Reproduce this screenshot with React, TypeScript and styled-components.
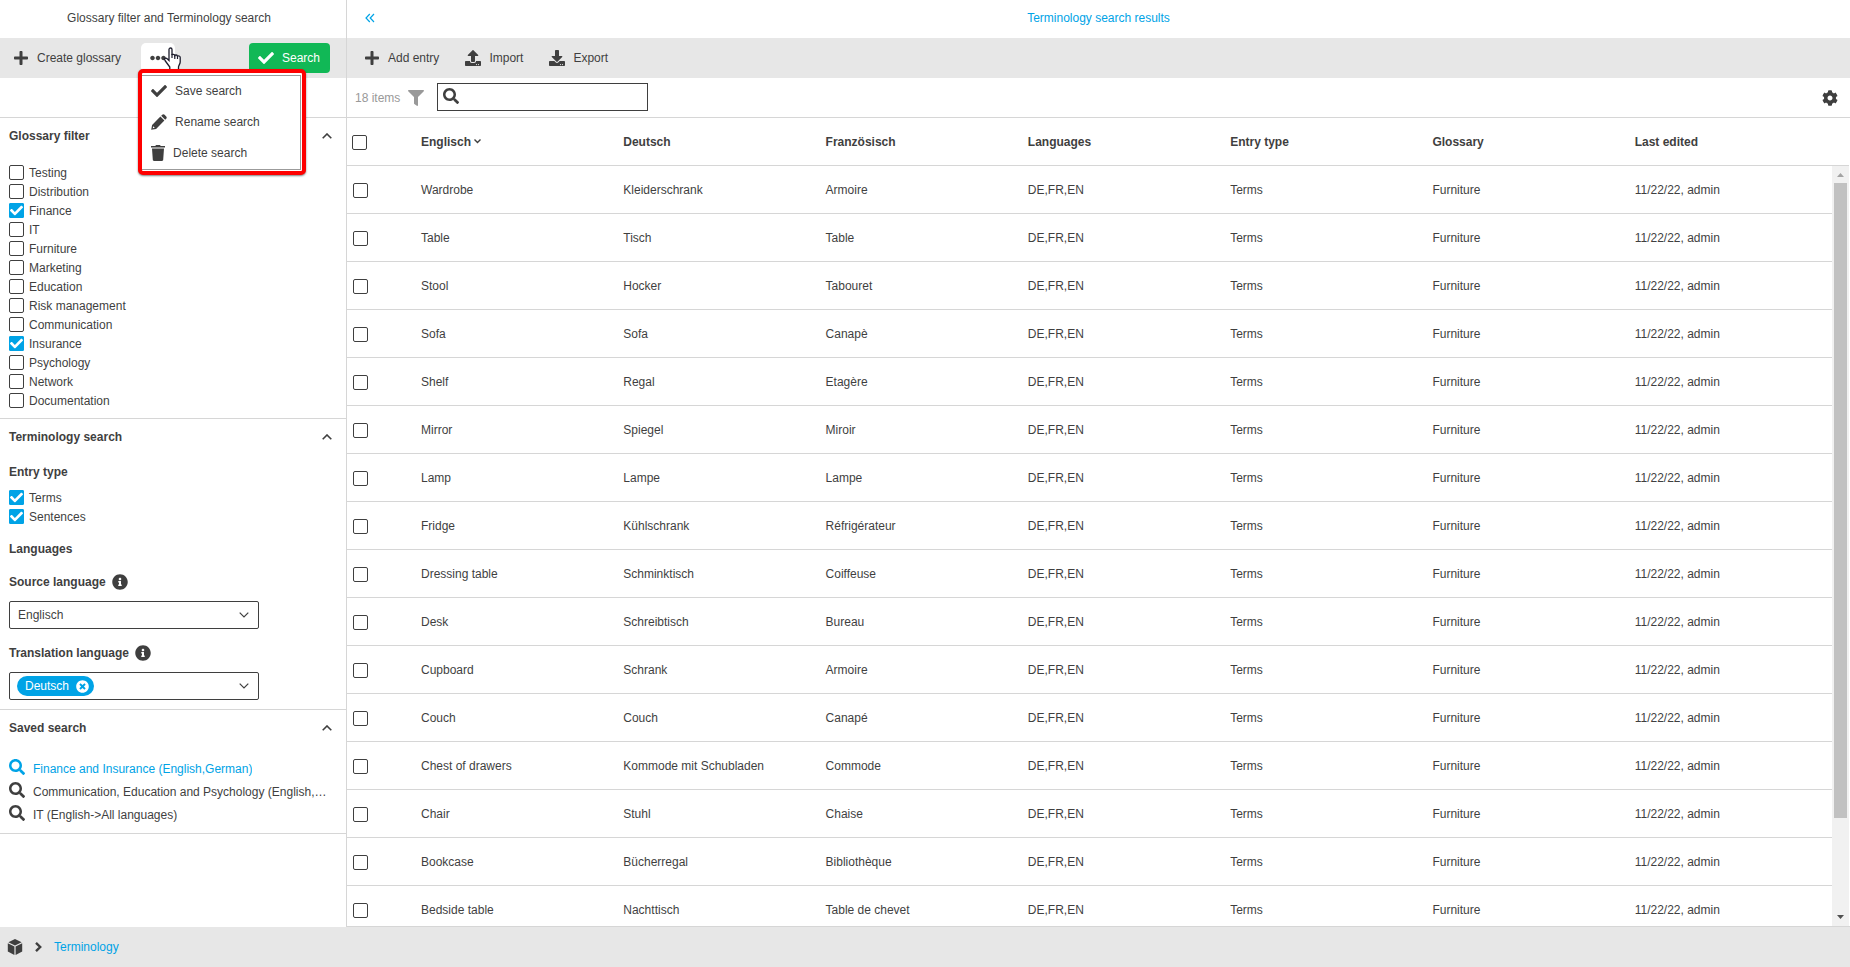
import React, { useState } from 'react';
import styled, { createGlobalStyle, css } from 'styled-components';
import {
  FaPlus, FaCheck, FaSearch, FaInfoCircle, FaFilter,
  FaUpload, FaDownload, FaCog, FaEllipsisH, FaTimesCircle,
} from 'react-icons/fa';

const ink = '#3f3f3f';
const blue = '#00a3e6';
const line = '#d6d6d6';
const bar = '#e7e7e7';

const GlobalStyle = createGlobalStyle`
  * { box-sizing: border-box; }
  body {
    margin: 0;
    background: #fff;
    color: ${ink};
    font: 12px/16px "Liberation Sans", Arial, sans-serif;
  }
  button, input, select { font: inherit; color: inherit; }
  button { background: none; border: 0; padding: 0; cursor: pointer; }
  svg { display: block; flex: none; }
`;

const Page = styled.div`
  display: grid;
  grid-template: minmax(0, 1fr) 40px / 347px minmax(0, 1fr);
  height: 100vh;
`;

const Sidebar = styled.aside`
  display: flex;
  flex-direction: column;
  border-right: 1px solid ${line};
  min-height: 0;
`;

const Main = styled.main`
  display: flex;
  flex-direction: column;
  min-height: 0;
  border-bottom: 1px solid ${line};
`;

const TitleBar = styled.header`
  display: grid;
  grid-template-columns: 40px 1fr 40px;
  align-items: center;
  height: 38px;
  flex: none;
  padding-bottom: 2px;
`;

const SideTitleBar = styled(TitleBar)`
  padding-right: 8px;
`;

const Title = styled.h1<{ $accent?: boolean }>`
  grid-column: 2;
  margin: 0;
  font-size: 12px;
  font-weight: 400;
  text-align: center;
  color: ${p => (p.$accent ? blue : ink)};
`;

const CollapseButton = styled.button`
  display: flex;
  justify-content: center;
  padding-left: 6px;
`;

const Toolbar = styled.div`
  display: flex;
  align-items: center;
  height: 40px;
  flex: none;
  padding: 0 16px 0 13px;
  background: ${bar};
`;

const MainToolbar = styled(Toolbar)`
  gap: 26px;
  padding-left: 17px;
`;

const ToolButton = styled.button`
  display: flex;
  align-items: center;
  gap: 8px;
`;

const MoreWrap = styled.div`
  position: relative;
  margin-left: 20px;
`;

const MoreButton = styled.button`
  display: flex;
  align-items: center;
  justify-content: center;
  width: 34px;
  height: 30px;
  border-radius: 5px;
  background: #fff;
`;

const SearchButton = styled.button`
  display: flex;
  align-items: center;
  gap: 8px;
  height: 30px;
  margin-left: auto;
  padding: 0 10px 0 9px;
  border-radius: 4px;
  background: #11b856;
  color: #fff;
`;

const Cursor = styled.svg`
  position: absolute;
  left: 22px;
  top: 4px;
  z-index: 1;
`;

const Highlight = styled.div`
  position: absolute;
  left: -3px;
  top: 26px;
  z-index: 2;
  width: 168px;
  border: 4px solid #fe0000;
  border-radius: 5px;
  background: #fff;
  box-shadow: 0 1px 2px rgba(0, 0, 0, 0.5);
`;

const Menu = styled.ul`
  margin: 2px 1px 1px 0;
  padding: 0;
  list-style: none;
  border: 1px solid #9b9b9b;
  border-left: 0;
`;

const MenuItem = styled.button`
  display: flex;
  align-items: center;
  gap: 8px;
  width: 100%;
  height: 31px;
  padding: 0 0 2px 9px;
`;

const Strip = styled.div`
  display: flex;
  align-items: center;
  height: 40px;
  flex: none;
  padding: 0 12px 0 8px;
  border-bottom: 1px solid ${line};
`;

const Count = styled.span`
  color: #999;
  margin-right: 8px;
`;

const FilterButton = styled.button`
  color: #999;
  margin-right: 13px;
`;

const SearchField = styled.label`
  display: flex;
  width: 211px;
  height: 28px;
  margin-bottom: 2px;
  padding: 4px 5px;
  gap: 6px;
  border: 1px solid ${ink};
`;

const SearchInput = styled.input`
  flex: 1;
  min-width: 0;
  padding: 0;
  border: 0;
  outline: 0;
  background: none;
`;

const SettingsButton = styled.button`
  margin-left: auto;
`;

const Section = styled.section<{ $bottom: number }>`
  padding: 0 9px ${p => p.$bottom}px;
  border-bottom: 1px solid ${line};
`;

const SectionHeader = styled.button`
  display: flex;
  align-items: center;
  justify-content: space-between;
  width: 100%;
  height: 36px;
  padding-right: 5px;
  font-weight: 700;
`;

const fieldTitle = css`
  display: flex;
  align-items: center;
  height: 33px;
  margin: 0;
  gap: 6px;
  font-size: 12px;
  font-weight: 700;
`;

const SubHeading = styled.h3`${fieldTitle}`;
const FieldLabel = styled.label`${fieldTitle}`;

const Group = styled.div`
  padding-top: 6px;
`;

const CheckList = styled.div<{ $top?: number }>`
  padding-top: ${p => p.$top ?? 0}px;
`;

const CheckLabel = styled.label`
  display: flex;
  align-items: center;
  gap: 5px;
  height: 19px;
`;

const CheckBox = styled.span`
  display: grid;
  flex: none;
  width: 15px;
  height: 15px;
  color: #fff;
  > * { grid-area: 1 / 1; place-self: center; }
`;

const CheckInput = styled.input`
  appearance: none;
  width: 15px;
  height: 15px;
  margin: 0;
  border: 1px solid ${ink};
  border-radius: 2px;
  background: #fff;
  &:checked { background: ${blue}; border-color: ${blue}; border-radius: 1px; }
  & + svg { visibility: hidden; pointer-events: none; }
  &:checked + svg { visibility: visible; }
`;

const SelectBox = styled.div`
  display: grid;
  align-items: center;
  width: 250px;
  height: 28px;
  margin: 3px 0 1px;
  border: 1px solid ${ink};
  border-radius: 2px;
  > * { grid-area: 1 / 1; }
  > svg { justify-self: end; margin-right: 9px; pointer-events: none; }
`;

const Select = styled.select`
  appearance: none;
  width: 100%;
  height: 26px;
  padding: 0 8px;
  border: 0;
  outline: 0;
  background: transparent;
`;

const Chip = styled.span`
  display: flex;
  align-items: center;
  justify-self: start;
  gap: 7px;
  height: 20px;
  margin-left: 7px;
  padding: 0 5px 0 8px;
  border-radius: 10px;
  background: ${blue};
  color: #fff;
`;

const SavedList = styled.ul`
  margin: 0;
  padding: 11px 0 0;
  list-style: none;
`;

const SavedLink = styled.a<{ $active?: boolean }>`
  display: flex;
  gap: 8px;
  height: 23px;
  padding: 2px 9px 0 0;
  color: ${p => (p.$active ? blue : ink)};
  text-decoration: none;
`;

const SavedText = styled.span`
  overflow: hidden;
  padding-top: 2px;
  white-space: nowrap;
  text-overflow: ellipsis;
`;

const Results = styled.div`
  display: grid;
  grid-template-columns: minmax(0, 1fr) 17px;
  flex: 1;
  min-height: 0;
  padding-right: 1px;
`;

const TableView = styled.div`
  overflow: hidden;
  min-height: 0;
`;

const Table = styled.table`
  width: 100%;
  table-layout: fixed;
  border-collapse: separate;
  border-spacing: 0;
`;

const CheckCol = styled.col`
  width: 69px;
`;

const Th = styled.th`
  height: 48px;
  padding: 0 5px;
  border-bottom: 1px solid ${line};
  text-align: left;
  &:first-child { padding-top: 2px; }
`;

const Td = styled.td`
  height: 48px;
  padding: 0 5px;
  border-bottom: 1px solid ${line};
  &:first-child { padding: 2px 0 0 6px; }
`;

const SortButton = styled.button`
  display: flex;
  align-items: center;
  gap: 3px;
  font-weight: 700;
`;

const Scroller = styled.div`
  display: flex;
  flex-direction: column;
  min-height: 0;
`;

const ScrollerHead = styled.div`
  height: 48px;
  border-bottom: 1px solid ${line};
`;

const Track = styled.div`
  display: flex;
  flex: 1;
  flex-direction: column;
  background: #f1f1f1;
  > svg { margin: 0 auto; }
`;

const Rail = styled.div`
  flex: 1;
  padding: 0 2px;
`;

const Thumb = styled.div`
  height: 87.5%;
  background: #c1c1c1;
`;

const Footer = styled.footer`
  grid-column: 1 / -1;
  display: flex;
  align-items: center;
  gap: 12px;
  padding-left: 7px;
  background: ${bar};
`;

const Crumb = styled.a`
  color: ${blue};
  text-decoration: none;
`;

function Chevron({ up, w = 10, stroke = 2 }: { up?: boolean; w?: number; stroke?: number }) {
  return (
    <svg width={w} height={w * 0.6} viewBox="0 0 10 6" fill="none" stroke="currentColor" strokeWidth={stroke}>
      <path d={up ? 'M.7 5.3 5 1l4.3 4.3' : 'M.7.7 5 5 9.3.7'} />
    </svg>
  );
}

function Pencil() {
  return (
    <svg width="16" height="16" viewBox="0 0 16 16" fill="currentColor">
      <path d="M11.200.8c.7-.7 1.700-.7 2.400 0l1.600 1.600c.7.7.7 1.700 0 2.400l-1 1-4-4z" />
      <path fillRule="evenodd" d="M9.400 2.600l4 4-8.300 8.300L.2 15.800l.9-4.900zM2.200 12.200l-.4 2 2-.4z" />
    </svg>
  );
}

function Trash() {
  return (
    <svg width="14" height="16" viewBox="0 0 14 16" fill="currentColor">
      <path d="M0 1h4.300l.7-1h4l.7 1H14v1.600H0zM1 3.600h12l-.8 11.200c0 .7-.5 1.200-1.200 1.200H3c-.7 0-1.200-.5-1.200-1.200z" />
    </svg>
  );
}

function Cube() {
  return (
    <svg width="16" height="16" viewBox="0 0 16 16" fill="currentColor">
      <path d="M8 0l6.600 3.200L8 6.400 1.400 3.200zM.8 4.200l6.600 3.200V16L.8 12.400zM15.200 4.200 8.600 7.400V16l6.600-3.600z" />
    </svg>
  );
}

function CrumbArrow() {
  return (
    <svg width="7" height="10" viewBox="0 0 7 10" fill="none" stroke="currentColor" strokeWidth="2.400">
      <path d="M1 .9 5.200 5 1 9.100" />
    </svg>
  );
}

function Check({ label, checked, hideLabel }: { label: string; checked?: boolean; hideLabel?: boolean }) {
  const box = (
    <CheckBox>
      <CheckInput type="checkbox" defaultChecked={checked} aria-label={hideLabel ? label : undefined} />
      <FaCheck size={13} />
    </CheckBox>
  );
  return hideLabel ? box : <CheckLabel>{box}{label}</CheckLabel>;
}

const glossaries = [
  'Testing', 'Distribution', 'Finance', 'IT', 'Furniture', 'Marketing', 'Education',
  'Risk management', 'Communication', 'Insurance', 'Psychology', 'Network', 'Documentation',
];

const columns = ['Englisch', 'Deutsch', 'Französisch', 'Languages', 'Entry type', 'Glossary', 'Last edited'];

const entries = [
  ['Wardrobe', 'Kleiderschrank', 'Armoire'],
  ['Table', 'Tisch', 'Table'],
  ['Stool', 'Hocker', 'Tabouret'],
  ['Sofa', 'Sofa', 'Canapè'],
  ['Shelf', 'Regal', 'Etagère'],
  ['Mirror', 'Spiegel', 'Miroir'],
  ['Lamp', 'Lampe', 'Lampe'],
  ['Fridge', 'Kühlschrank', 'Réfrigérateur'],
  ['Dressing table', 'Schminktisch', 'Coiffeuse'],
  ['Desk', 'Schreibtisch', 'Bureau'],
  ['Cupboard', 'Schrank', 'Armoire'],
  ['Couch', 'Couch', 'Canapé'],
  ['Chest of drawers', 'Kommode mit Schubladen', 'Commode'],
  ['Chair', 'Stuhl', 'Chaise'],
  ['Bookcase', 'Bücherregal', 'Bibliothèque'],
  ['Bedside table', 'Nachttisch', 'Table de chevet'],
];

const savedSearches = [
  'Finance and Insurance (English,German)',
  'Communication, Education and Psychology (English,German)',
  'IT (English->All languages)',
];

function Panel({ title, bottom, children }: { title: string; bottom: number; children: React.ReactNode }) {
  const [open, setOpen] = useState(true);
  return (
    <Section $bottom={open ? bottom : 0}>
      <SectionHeader type="button" aria-expanded={open} onClick={() => setOpen(!open)}>
        {title}
        <Chevron up={open} stroke={1.6} />
      </SectionHeader>
      {open && children}
    </Section>
  );
}

export default function App() {
  return (
    <Page>
      <GlobalStyle />
      <Sidebar>
        <SideTitleBar><Title>Glossary filter and Terminology search</Title></SideTitleBar>
        <Toolbar>
          <ToolButton type="button"><FaPlus size={16} />Create glossary</ToolButton>
          <MoreWrap>
            <MoreButton type="button" aria-label="More"><FaEllipsisH size={16} /></MoreButton>
            <Highlight>
              <Menu>
                <li><MenuItem type="button"><FaCheck size={16} />Save search</MenuItem></li>
                <li><MenuItem type="button"><Pencil />Rename search</MenuItem></li>
                <li><MenuItem type="button"><Trash />Delete search</MenuItem></li>
              </Menu>
            </Highlight>
            <Cursor width="19" height="24" viewBox="0 0 19 24">
              <path
                d="M6 2.500c0-2 3-2 3 0V8c.4-1 2.600-.9 2.800.6.5-1 2.400-.8 2.700.7.8-.8 2.700-.4 2.700 1.300V15c0 2-1.700 3.500-1.700 5v3H6.800v-3L2 13.500c-1.300-1.900.8-3.200 2.200-1.700L6 13.500z"
                fill="#fff" stroke="#1c1c2c" strokeWidth="1.300"
              />
              <path d="M9 7v4M11.800 8.500V12M14.500 9.500V12" stroke="#1c1c2c" strokeWidth="1.200" />
            </Cursor>
          </MoreWrap>
          <SearchButton type="button"><FaCheck size={16} />Search</SearchButton>
        </Toolbar>
        <Strip />
        <Panel title="Glossary filter" bottom={8}>
          <CheckList $top={9}>
            {glossaries.map(g => <Check key={g} label={g} checked={g === 'Finance' || g === 'Insurance'} />)}
          </CheckList>
        </Panel>
        <Panel title="Terminology search" bottom={8}>
          <SubHeading>Entry type</SubHeading>
          <CheckList>
            <Check label="Terms" checked />
            <Check label="Sentences" checked />
          </CheckList>
          <Group>
            <SubHeading>Languages</SubHeading>
            <FieldLabel htmlFor="source">Source language <FaInfoCircle size={16} /></FieldLabel>
            <SelectBox>
              <Select id="source"><option>Englisch</option></Select>
              <Chevron stroke={1.2} />
            </SelectBox>
          </Group>
          <Group>
            <FieldLabel htmlFor="translation">Translation language <FaInfoCircle size={16} /></FieldLabel>
            <SelectBox>
              <Select id="translation"><option aria-label="None" /></Select>
              <Chip>Deutsch<button type="button" aria-label="Remove"><FaTimesCircle size={13} color="#fff" /></button></Chip>
              <Chevron stroke={1.2} />
            </SelectBox>
          </Group>
        </Panel>
        <Panel title="Saved search" bottom={7}>
          <SavedList>
            {savedSearches.map((s, i) => (
              <li key={s}>
                <SavedLink href="#" $active={i === 0}><FaSearch size={16} /><SavedText>{s}</SavedText></SavedLink>
              </li>
            ))}
          </SavedList>
        </Panel>
      </Sidebar>

      <Main>
        <TitleBar>
          <CollapseButton type="button" aria-label="Collapse">
            <svg width="10" height="10" viewBox="0 0 10 10" fill="none" stroke={blue} strokeWidth="1.200">
              <path d="M4.800 1 1 5l3.800 4M9 1 5.200 5 9 9" />
            </svg>
          </CollapseButton>
          <Title $accent>Terminology search results</Title>
        </TitleBar>
        <MainToolbar>
          <ToolButton type="button"><FaPlus size={16} />Add entry</ToolButton>
          <ToolButton type="button"><FaUpload size={16} />Import</ToolButton>
          <ToolButton type="button"><FaDownload size={16} />Export</ToolButton>
        </MainToolbar>
        <Strip>
          <Count>18 items</Count>
          <FilterButton type="button" aria-label="Filter"><FaFilter size={16} /></FilterButton>
          <SearchField>
            <FaSearch size={16} />
            <SearchInput type="text" aria-label="Search entries" />
          </SearchField>
          <SettingsButton type="button" aria-label="Settings"><FaCog size={16} /></SettingsButton>
        </Strip>
        <Results>
          <TableView>
            <Table>
              <colgroup>
                <CheckCol />
                {columns.map(c => <col key={c} />)}
              </colgroup>
              <thead>
                <tr>
                  <Th><Check label="Select all" hideLabel /></Th>
                  {columns.map((c, i) => (
                    <Th key={c}>
                      {i === 0 ? <SortButton type="button">{c}<Chevron w={7} stroke={2} /></SortButton> : c}
                    </Th>
                  ))}
                </tr>
              </thead>
              <tbody>
                {entries.map(e => (
                  <tr key={e[0]}>
                    <Td><Check label={e[0]} hideLabel /></Td>
                    {[...e, 'DE,FR,EN', 'Terms', 'Furniture', '11/22/22, admin'].map((v, i) => <Td key={i}>{v}</Td>)}
                  </tr>
                ))}
              </tbody>
            </Table>
          </TableView>
          <Scroller>
            <ScrollerHead />
            <Track>
              <svg width="17" height="17" viewBox="0 0 17 17"><path d="M5 11h7L8.500 7z" fill="#a3a3a3" /></svg>
              <Rail><Thumb /></Rail>
              <svg width="17" height="17" viewBox="0 0 17 17"><path d="M5 6h7l-3.500 4z" fill="#505050" /></svg>
            </Track>
          </Scroller>
        </Results>
      </Main>

      <Footer>
        <Cube />
        <CrumbArrow />
        <Crumb href="#">Terminology</Crumb>
      </Footer>
    </Page>
  );
}
